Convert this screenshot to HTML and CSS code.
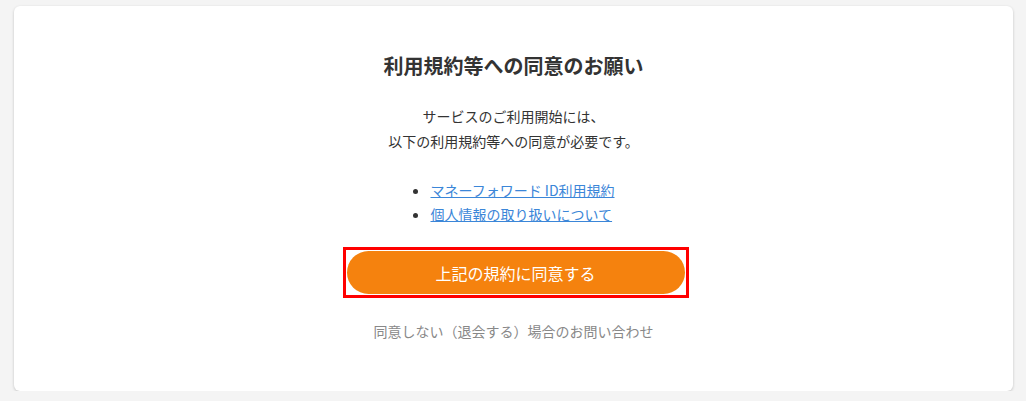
FILE: index.html
```html
<!DOCTYPE html>
<html lang="ja">
<head>
    <meta charset="UTF-8">
    <meta name="viewport" content="width=device-width, initial-scale=1.0">
    <title>利用規約等への同意のお願い</title>
    <link rel="stylesheet" href="styles.css">
</head>
<body>
    <div class="card">
        <h1 class="title">利用規約等への同意のお願い</h1>
        <p class="lead">サービスのご利用開始には、<br>以下の利用規約等への同意が必要です。</p>
        <ul class="terms">
            <li><a href="#">マネーフォワード ID利用規約</a></li>
            <li><a href="#">個人情報の取り扱いについて</a></li>
        </ul>
        <div class="actions">
            <button class="agree">上記の規約に同意する</button>
        </div>
        <a class="contact" href="#">同意しない（退会する）場合のお問い合わせ</a>
    </div>
</body>
</html>
```

FILE: styles.css
```css
* {
    margin: 0;
    padding: 0;
    box-sizing: border-box;
}
body {
    background-color: #f4f4f4;
    padding: 6px 13px 0 14px;
    font-family: "Noto Sans CJK JP", "Noto Sans", sans-serif;
    color: #333;
}
.card {
    background-color: #fff;
    border-radius: 6px;
    box-shadow: 0 1px 3px rgba(0, 0, 0, 0.2);
    height: 385px;
    padding-top: 46px;
    display: flex;
    flex-direction: column;
    align-items: center;
    text-align: center;
}
.title {
    font-size: 20px;
    font-weight: bold;
    line-height: 28px;
}
.lead {
    font-size: 14px;
    line-height: 25px;
    margin-top: 24px;
}
.terms {
    font-size: 14px;
    line-height: 24px;
    text-align: left;
    padding-left: 18px;
    margin-top: 24px;
}
.terms a {
    color: #3b86d8;
}
.actions {
    margin-top: 21px;
    margin-left: 4px;
    border: 3px solid #ff0000;
    padding: 1px;
}
.agree {
    display: block;
    width: 338px;
    height: 43px;
    border: none;
    border-radius: 22px;
    background-color: #f5820e;
    color: #fff;
    font-family: inherit;
    font-size: 16px;
    cursor: pointer;
}
.contact {
    margin-top: 23px;
    font-size: 14px;
    line-height: 20px;
    color: #888;
    text-decoration: none;
}
```
